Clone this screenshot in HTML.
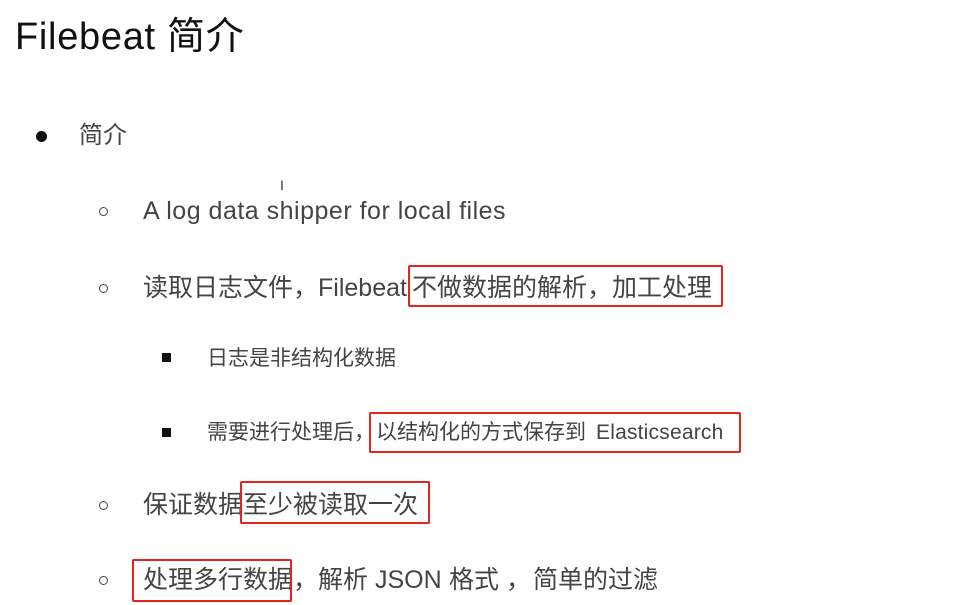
<!DOCTYPE html>
<html><head><meta charset="utf-8"><style>
body{margin:0;width:957px;height:605px;background:#fff;position:relative;overflow:hidden;font-family:"Liberation Sans","Noto Sans CJK SC",sans-serif;color:#444;}
.a{position:absolute;white-space:nowrap;line-height:1;}
.box{position:absolute;border:2.5px solid #e8221c;border-radius:2px;box-sizing:border-box;}
.c{position:absolute;width:9px;height:9px;border:1.5px solid #444;border-radius:50%;box-sizing:border-box;}
.s{position:absolute;width:9px;height:9px;background:#111;}
</style></head><body>
<div class="a" style="left:15px;top:18px;font-size:38px;color:#111;letter-spacing:0.7px;">Filebeat 简介</div>
<div style="position:absolute;left:36px;top:131px;width:11px;height:11px;border-radius:50%;background:#111;"></div>
<div class="a" style="left:79px;top:124px;font-size:24px;">简介</div>
<div class="a" style="left:280px;top:178px;font-size:14px;color:#333;">I</div>
<div class="c" style="left:99px;top:207px;"></div>
<div class="a" style="left:143px;top:199px;font-size:25px;letter-spacing:0.5px;">A log data shipper for local files</div>
<div class="c" style="left:99px;top:284px;"></div>
<div class="a" style="left:143px;top:276px;font-size:25px;">读取日志文件，Filebeat</div>
<div class="a" style="left:412px;top:276px;font-size:25px;">不做数据的解析，加工处理</div>
<div class="box" style="left:408px;top:265px;width:315px;height:42px;"></div>
<div class="s" style="left:162px;top:353px;"></div>
<div class="a" style="left:207px;top:348px;font-size:21px;">日志是非结构化数据</div>
<div class="s" style="left:162px;top:428px;"></div>
<div class="a" style="left:207px;top:422px;font-size:21px;">需要进行处理后，</div>
<div class="a" style="left:376px;top:422px;font-size:21px;">以结构化的方式保存到</div>
<div class="a" style="left:596px;top:422px;font-size:21px;letter-spacing:0.2px;">Elasticsearch</div>
<div class="box" style="left:369px;top:412px;width:372px;height:41px;"></div>
<div class="c" style="left:99px;top:501px;"></div>
<div class="a" style="left:143px;top:493px;font-size:25px;">保证数据至少被读取一次</div>
<div class="box" style="left:240px;top:481px;width:190px;height:43px;"></div>
<div class="c" style="left:99px;top:576px;"></div>
<div class="a" style="left:143px;top:568px;font-size:25px;">处理多行数据，解析</div>
<div class="a" style="left:375px;top:568px;font-size:25px;">JSON</div>
<div class="a" style="left:449px;top:568px;font-size:25px;">格式 ，</div>
<div class="a" style="left:533px;top:568px;font-size:25px;">简单的过滤</div>
<div class="box" style="left:132px;top:559px;width:160px;height:43px;"></div>
</body></html>
